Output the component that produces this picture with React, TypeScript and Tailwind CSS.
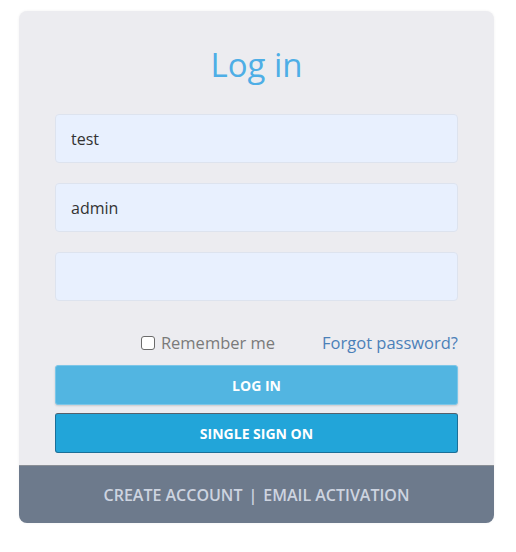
import { useState } from "react";

const App = () => {
  const [username, setUsername] = useState("test");
  const [tenant, setTenant] = useState("admin");
  const [password, setPassword] = useState("");
  const [remember, setRemember] = useState(false);

  return (
    <div className="min-h-[552px] bg-white pt-[11px] pl-[19px] font-['Open_Sans',sans-serif]">
      <div className="w-[475px] rounded-lg bg-[#ececf0] overflow-hidden shadow-[0_0_3px_rgba(0,0,0,0.06)]">
        <div className="px-9 pt-[31px] pb-3">
          <h1 className="text-center text-[33px] leading-[46px] text-[#4eaee6] mb-[26px]">Log in</h1>

          {/* Inputs */}
          <div className="flex flex-col gap-5">
            <input
              type="text"
              value={username}
              onChange={(e) => setUsername(e.target.value)}
              className="h-[49px] w-full rounded border border-[#dde3ee] bg-[#e8f0fe] px-[15px] text-[16px] text-[#333] outline-none"
            />
            <input
              type="text"
              value={tenant}
              onChange={(e) => setTenant(e.target.value)}
              className="h-[49px] w-full rounded border border-[#dde3ee] bg-[#e8f0fe] px-[15px] text-[16px] text-[#333] outline-none"
            />
            <input
              type="password"
              value={password}
              onChange={(e) => setPassword(e.target.value)}
              className="h-[49px] w-full rounded border border-[#dde3ee] bg-[#e8f0fe] px-[15px] text-[16px] text-[#333] outline-none"
            />
          </div>

          {/* Remember / forgot */}
          <div className="mt-[30px] flex h-6 items-center justify-end">
            <label className="flex items-center gap-[6px] text-[16.5px] text-[#7a7a7a]">
              <input
                type="checkbox"
                checked={remember}
                onChange={(e) => setRemember(e.target.checked)}
                className="h-[14px] w-[14px] appearance-none rounded-[3px] border-[1.5px] border-[#6b6b6b] bg-white"
              />
              Remember me
            </label>
            <a href="#" className="ml-[47px] text-[16.5px] text-[#4b80b8]">Forgot password?</a>
          </div>

          {/* Buttons */}
          <div className="mt-[10px] flex flex-col gap-2">
            <button className="h-10 w-full rounded-[3px] border border-[#7cc6e8] bg-[#52b5e1] text-[14px] font-bold text-white shadow-[0_1px_2px_rgba(0,0,0,0.15)]">
              LOG IN
            </button>
            <button className="h-10 w-full rounded-[3px] border border-[#1b6f98] border-t-[#55606c] bg-[#22a5d9] text-[14px] font-bold text-white">
              SINGLE SIGN ON
            </button>
          </div>
        </div>

        {/* Footer */}
        <div className="flex h-[58px] items-center justify-center border-t border-[#8a8f96] bg-[#6d7a8c] text-[16px] font-semibold text-[#cdd4e0]">
          <a href="#">CREATE ACCOUNT</a>
          <span className="mx-[6px]">|</span>
          <a href="#">EMAIL ACTIVATION</a>
        </div>
      </div>
    </div>
  );
};

export default App;
